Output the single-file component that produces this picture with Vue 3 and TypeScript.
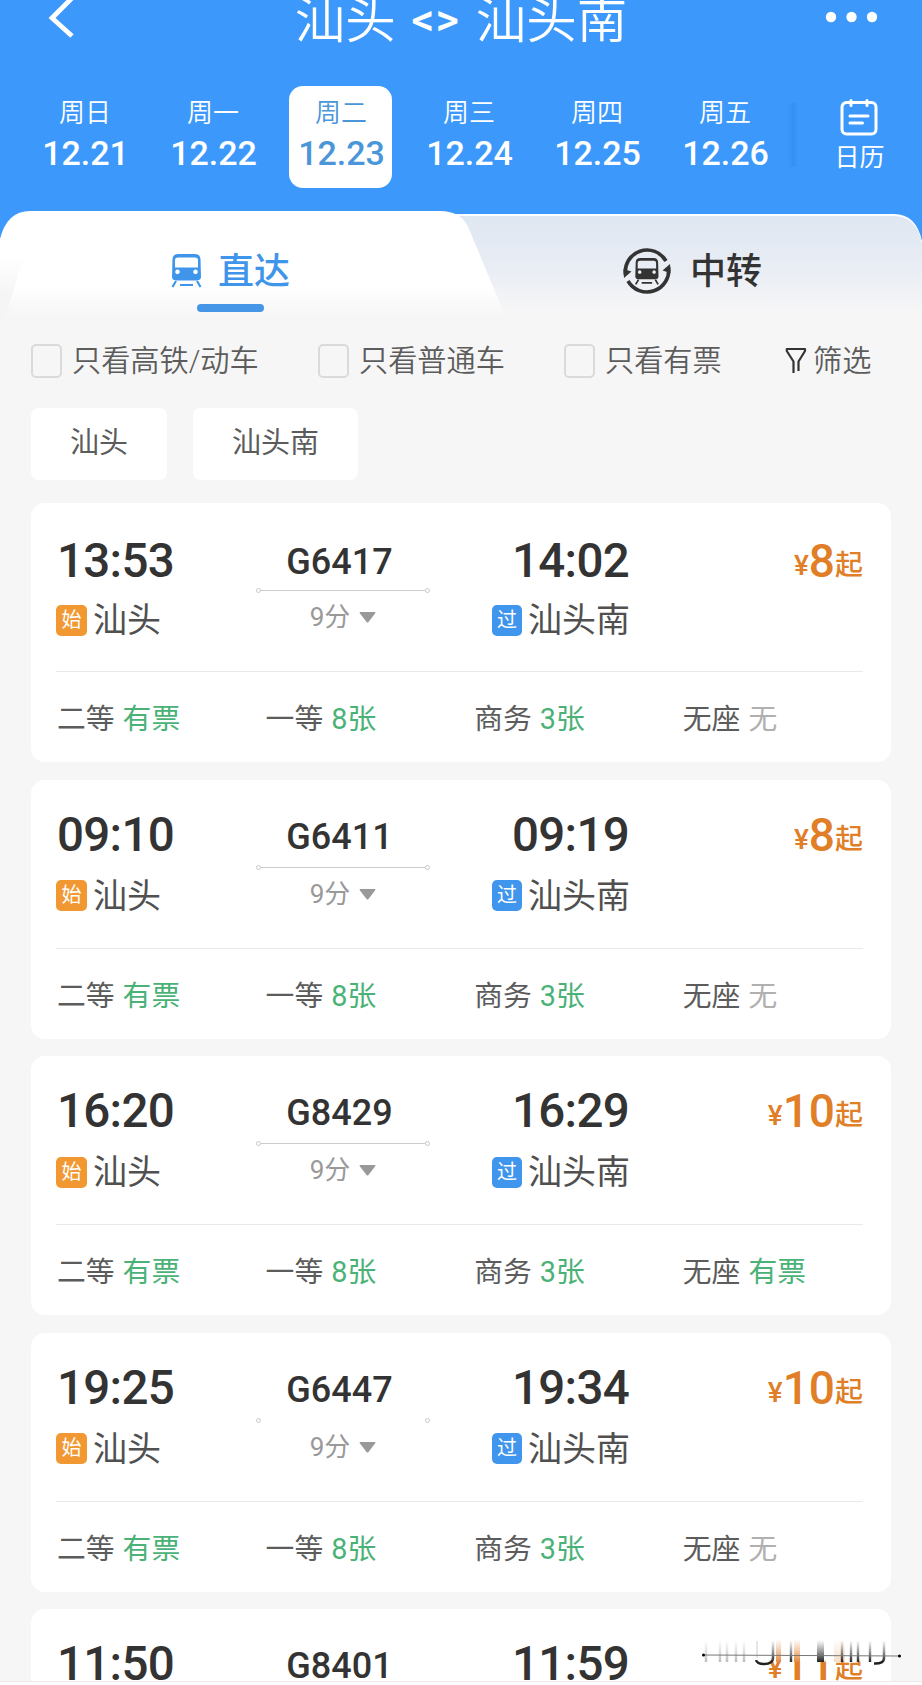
<script setup lang="ts">
interface Day { week: string; date: string; active?: boolean }
interface Seat { name: string; value: string; none?: boolean }
interface Train { depart: string; arrive: string; code: string; price: string; seats: Seat[]; noLine?: boolean }

const days: Day[] = [
  { week: '周日', date: '12.21' },
  { week: '周一', date: '12.22' },
  { week: '周二', date: '12.23', active: true },
  { week: '周三', date: '12.24' },
  { week: '周四', date: '12.25' },
  { week: '周五', date: '12.26' },
]

const seats = (standing: string): Seat[] => [
  { name: '二等', value: '有票' },
  { name: '一等', value: '8张' },
  { name: '商务', value: '3张' },
  { name: '无座', value: standing, none: standing === '无' },
]

const trains: Train[] = [
  { depart: '13:53', arrive: '14:02', code: 'G6417', price: '8', seats: seats('无') },
  { depart: '09:10', arrive: '09:19', code: 'G6411', price: '8', seats: seats('无') },
  { depart: '16:20', arrive: '16:29', code: 'G8429', price: '10', seats: seats('有票') },
  { depart: '19:25', arrive: '19:34', code: 'G6447', price: '10', seats: seats('无'), noLine: true },
  { depart: '11:50', arrive: '11:59', code: 'G8401', price: '11', seats: [] },
]
</script>

<template>
  <div class="page">
    <header class="header">
      <div class="bar">
        <svg class="back" width="32" height="44" viewBox="0 0 32 44"><path d="M28 2 7 23 27 41" /></svg>
        <h1 class="title"><span>汕头</span><span class="swap">&lt;&gt;</span><span>汕头南</span></h1>
        <svg class="more" width="54" height="12" viewBox="0 0 54 12"><circle cx="6" cy="6" r="5.2" /><circle cx="26.5" cy="6" r="5.2" /><circle cx="47" cy="6" r="5.2" /></svg>
      </div>
      <div class="dates">
        <div v-for="d in days" :key="d.date" class="day" :class="{ active: d.active }">
          <span class="week">{{ d.week }}</span>
          <span class="date">{{ d.date }}</span>
        </div>
        <i class="edge"></i>
        <div class="calendar">
          <svg width="38" height="38" viewBox="0 0 38 38"><rect x="2" y="3.500" width="34" height="31.500" rx="4.500" /><path d="M11 1.500v5M27 1.500v5M10 17h18M10 24h12.500" /></svg>
          <span>日历</span>
        </div>
      </div>
    </header>

    <nav class="tabs">
      <svg class="tabs-bg" width="922" height="110" viewBox="0 0 922 110">
        <defs>
          <linearGradient id="side" x1="0" y1="0" x2="0" y2="1"><stop offset="0" stop-color="#dfe7f2" /><stop offset=".5" stop-color="#e9edf4" /><stop offset=".9" stop-color="#f6f6f7" /></linearGradient>
          <linearGradient id="front" x1="0" y1="0" x2="0" y2="1"><stop offset="0" stop-color="#fff" /><stop offset=".68" stop-color="#fff" /><stop offset=".96" stop-color="#f6f6f6" /></linearGradient>
          <linearGradient id="fold" x1="0" y1="0" x2="0" y2="1"><stop offset="0" stop-color="#f5f5f6" stop-opacity="0" /><stop offset=".6" stop-color="#f5f5f6" /></linearGradient>
        </defs>
        <path d="M0 110V30Q5 3 30 3H894Q916 3 922 30V110Z" fill="#fff" />
        <path d="M0 110V32Q5 5 30 5H894Q916 5 922 32V110Z" fill="url(#side)" />
        <path d="M0 28Q7 0 30 0H440Q462 0 469 18L504 102V110H0Z" fill="url(#front)" />
        <path d="M0 45H24L4 110H0Z" fill="url(#fold)" />
      </svg>
      <div class="tab current">
        <svg width="31" height="34" viewBox="0 0 31 34">
          <path fill-rule="evenodd" fill="currentColor" d="M7 0H24Q29 0 29.500 5L30 23Q30 26 26 26.500H5Q1 26 1 23L1.500 5Q2 0 7 0ZM7 3.500Q4 3.500 4 6V13.500H27V6Q27 3.500 24 3.500ZM6.500 15.600a2.300 2.300 0 1 0 .01 0ZM24.500 15.600a2.300 2.300 0 1 0 .01 0Z" />
          <path d="M5 27 1.500 33M26 27l3.500 6M9 31h13" fill="none" stroke="currentColor" stroke-width="2.200" />
        </svg>
        <span>直达</span>
      </div>
      <div class="tab other">
        <svg width="50" height="50" viewBox="0 0 50 50">
          <path d="M3.500 29A21.800 21.800 0 0 1 44 15M46.500 21A21.800 21.800 0 0 1 6 35" fill="none" stroke="currentColor" stroke-width="3.600" />
          <path d="M1.500 23 9.500 25.500 2 32ZM48.500 27 40.500 24.500 48 18Z" fill="currentColor" />
          <g transform="translate(12.500 12) scale(.8)">
            <path fill-rule="evenodd" fill="currentColor" d="M7 0H24Q29 0 29.500 5L30 23Q30 26 26 26.500H5Q1 26 1 23L1.500 5Q2 0 7 0ZM7 3.500Q4 3.500 4 6V13H27V6Q27 3.500 24 3.500ZM6.500 15.400a2.200 2.200 0 1 0 .01 0ZM24.500 15.400a2.200 2.200 0 1 0 .01 0Z" />
            <path d="M5 27 1.500 33M26 27l3.500 6M9 31h13" fill="none" stroke="currentColor" stroke-width="2.200" />
          </g>
        </svg>
        <span>中转</span>
      </div>
    </nav>

    <div class="filters">
      <label class="check c1"><i></i>只看高铁/动车</label>
      <label class="check c2"><i></i>只看普通车</label>
      <label class="check c3"><i></i>只看有票</label>
      <div class="funnel">
        <svg width="22" height="28" viewBox="0 0 22 28"><path d="M8.500 26V14.500L1.800 4V2H20V4L13.500 14.500V24" /></svg>筛选
      </div>
    </div>

    <div class="chips"><span class="chip">汕头</span><span class="chip">汕头南</span></div>

    <main class="list">
      <article v-for="t in trains" :key="t.code" class="card">
        <div class="trip">
          <div class="from">
            <div class="time">{{ t.depart }}</div>
            <div class="station"><b class="tag start">始</b>汕头</div>
          </div>
          <div class="middle">
            <div class="code">{{ t.code }}</div>
            <div class="route" :class="{ bare: t.noLine }"><i></i><i></i></div>
            <div class="duration">9分<svg width="17" height="11" viewBox="0 0 17 11"><path d="M1 0H16Q17 0 16 1.500L9.500 10Q8.500 11 7.500 10L1 1.500Q0 0 1 0Z" /></svg></div>
          </div>
          <div class="to">
            <div class="time">{{ t.arrive }}</div>
            <div class="station"><b class="tag pass">过</b>汕头南</div>
          </div>
          <div class="price"><small>¥</small><span>{{ t.price }}</span><small>起</small></div>
        </div>
        <div class="seats">
          <div v-for="s in t.seats" :key="s.name" class="seat">{{ s.name }}<span :class="{ none: s.none }">{{ s.value }}</span></div>
        </div>
      </article>
    </main>

    <svg class="stamp" width="206" height="36" viewBox="0 0 206 36">
      <defs>
        <linearGradient id="haze" x1="0" y1="0" x2="0" y2="1"><stop offset="0" stop-color="#fff" /><stop offset=".9" stop-color="#fff" /><stop offset="1" stop-color="#fff" stop-opacity=".4" /></linearGradient>
        <linearGradient id="ink" gradientUnits="userSpaceOnUse" x1="0" y1="4" x2="0" y2="26"><stop offset="0" stop-color="#555" stop-opacity="0" /><stop offset="1" stop-color="#222" /></linearGradient>
        <linearGradient id="amber" gradientUnits="userSpaceOnUse" x1="0" y1="3" x2="0" y2="26"><stop offset="0" stop-color="#f0a060" stop-opacity="0" /><stop offset="1" stop-color="#e38a42" /></linearGradient>
      </defs>
      <rect width="193" height="26" fill="url(#haze)" />
      <path d="M79 4h5V26h-5ZM97 4h6V26h-6Z" fill="url(#amber)" />
      <path d="M137 4h11V26h-11Z" fill="url(#amber)" opacity=".3" />
      <path d="M9 5V26M23 5V26M30 5V26M39 5V26M47 5V26" stroke="url(#ink)" stroke-width="2.500" fill="none" opacity=".3" />
      <path d="M94 5V26M145 5V26M154 5V26M161 5V26M173 5V26" stroke="url(#ink)" stroke-width="2.400" fill="none" />
      <path d="M120 4h7V26h-7Z" fill="url(#ink)" />
      <path d="M76 5V22Q76 28 67 28Q60 28 59 24M187 5V22Q187 28 177 27.500" stroke="url(#ink)" stroke-width="2.500" fill="none" />
      <path d="M60 5V22" stroke="#555" stroke-width="2" opacity=".15" />
      <path d="M6 19 203 20" stroke="#777" stroke-width="1" /><circle cx="6.500" cy="19" r="1.500" /><circle cx="202.500" cy="20" r="1.500" />
    </svg>
    <footer class="foot"></footer>
  </div>
</template>

<style>
body { margin: 0; overflow: hidden; }
</style>

<style scoped>
.page { position: relative; width: 922px; height: 1685px; overflow: hidden; background: #f6f6f6; font-family: Roboto, "Noto Sans CJK SC", sans-serif; color: #333; }
.header { height: 240px; background: #3c99fb; color: #fff; }
.bar { position: relative; display: flex; justify-content: center; height: 86px; }
.back { position: absolute; left: 45px; top: -5px; fill: none; stroke: #fff; stroke-width: 4.800; }
.title { display: flex; margin: -16px 0 0; font-size: 50.500px; line-height: 74px; font-weight: 350; white-space: nowrap; }
.swap { width: 80px; text-align: center; font-size: 45px; font-weight: 500; letter-spacing: 1px; line-height: 71px; }
.more { position: absolute; left: 825px; top: 11px; fill: #fff; }
.dates { display: flex; padding-left: 21px; }
.day { display: flex; flex-direction: column; align-items: center; box-sizing: border-box; width: 103px; height: 102px; margin-right: 25px; padding-top: 10px; border-radius: 14px; }
.dates .day:first-child { margin-left: 12px; }
.active { background: #fff; color: #4b96d8; }
.week { padding-left: 1px; font-size: 26px; line-height: 34px; font-weight: 350; }
.date { padding-left: 2px; font-size: 34px; line-height: 46px; font-weight: 500; }
.edge { width: 10px; height: 64px; margin: 17px 0 0 -13px; background: linear-gradient(90deg, rgba(30, 110, 210, 0), rgba(30, 115, 215, .25), rgba(30, 110, 210, 0)); }
.calendar { display: flex; flex-direction: column; align-items: center; width: 60px; margin: 13px 0 0 31px; font-size: 25px; line-height: 41px; }
.calendar svg { fill: none; stroke: #fff; stroke-width: 3; stroke-linecap: round; }
.calendar span { padding-left: 1px; }
.tabs { position: relative; display: flex; height: 110px; margin-top: -29px; }
.tabs-bg { position: absolute; left: 0; top: 0; }
.tab { position: relative; display: flex; align-items: center; height: 118px; font-size: 36px; font-weight: 500; }
.tab svg { margin-top: 1px; }
.tab span { margin-top: -4px; }
.tab.current svg { margin-top: 2px; }
.current { width: 450px; padding-left: 171px; box-sizing: border-box; color: #3f95ea; gap: 16px; }
.current::after { content: ""; position: absolute; left: 197px; top: 93px; width: 67px; height: 8px; border-radius: 4px; background: #4596e6; }
.other { padding-left: 172px; gap: 18px; color: #333; }
.tabs .tabs-bg { margin: 0; }
.filters { display: flex; height: 50px; margin-top: 15px; line-height: 50px; font-size: 29.200px; font-weight: 350; color: #5c5c5c; white-space: nowrap; }
.check { display: flex; align-items: center; gap: 10px; }
.check i { box-sizing: border-box; width: 31px; height: 34px; border: 2.500px solid #dadada; border-radius: 5px; }
.c1 { width: 287px; margin-left: 31px; }
.c2 { width: 246px; }
.c3 { width: 221px; }
.funnel { display: flex; align-items: center; gap: 6px; }
.funnel svg { fill: none; stroke: #333; stroke-width: 2.200; stroke-linejoin: round; }
.chips { display: flex; gap: 26px; margin: 22px 0 0 31px; }
.chip { height: 72px; padding: 0 39px; background: #fff; border-radius: 8px; font-size: 29px; line-height: 71px; color: #5c5c5c; }
.list { display: flex; flex-direction: column; gap: 17.600px; margin: 23px 31px 0; }
.card { box-sizing: border-box; flex: none; height: 259px; padding: 0 28px 0 25px; border-radius: 14px; background: #fff; }
.trip { display: flex; box-sizing: border-box; height: 169px; padding-top: 25px; border-bottom: 1.500px solid #e9e9e9; }
.card:first-child .trip { padding-top: 28px; }
.card:first-child .station { margin-top: 1px; }
.time { font-size: 47.500px; line-height: 61px; height: 60px; font-weight: 500; letter-spacing: -.7px; }
.from .time { padding-left: 1px; }
.to .time { padding-right: 1px; }
.station { display: flex; align-items: center; gap: 6px; height: 56px; margin-top: 3px; font-size: 34px; line-height: 56px; color: #505050; white-space: nowrap; }
.tag { width: 31px; height: 31px; border-radius: 5px; color: #fff; font-size: 20px; line-height: 31px; font-weight: 400; text-align: center; }
.start { background: #f29832; }
.pass { width: 30px; background: #4095ec; }
.from { width: 200px; }
.middle { width: 174px; text-align: center; }
.code { padding-right: 7px; font-size: 36px; line-height: 64px; height: 60px; font-weight: 500; }
.card:first-child .code { height: 57px; line-height: 63px; }
.card:first-child .code + .route { margin-top: 0; }
.route { display: flex; justify-content: space-between; align-items: center; height: 5px; background: linear-gradient(#ccc, #ccc) center / 164px 1px no-repeat; }
.route.bare { background: none; }
.route i { box-sizing: border-box; width: 5px; height: 5px; border: 1px solid #c8c8c8; border-radius: 50%; }
.duration { display: flex; align-items: center; justify-content: center; gap: 9px; height: 49px; font-size: 26px; line-height: 49px; color: #999; }
.duration svg { fill: #999; }
.to { width: 200px; text-align: right; }
.to .station { justify-content: flex-end; }
.price { display: flex; align-items: baseline; justify-content: flex-end; flex: 1; height: 60px; line-height: 60px; font-size: 46px; font-weight: 500; color: #e07f28; }
.price small { margin-bottom: 2px; font-size: 28px; transform: translateY(-2px); }
.seats { display: flex; height: 92px; line-height: 94px; font-size: 28.800px; color: #5c5c5c; }
.seat { display: flex; flex: none; gap: 8px; width: 208.600px; padding-left: 1px; box-sizing: border-box; }
.seat span { color: #4bb277; }
.seat .none { color: #b0b0b0; }
.stamp { position: absolute; left: 697px; top: 1636px; }
.foot { position: absolute; left: 0; right: 0; bottom: 0; height: 3px; background: #fff; border-top: 1px solid #e9e9e9; }
</style>
